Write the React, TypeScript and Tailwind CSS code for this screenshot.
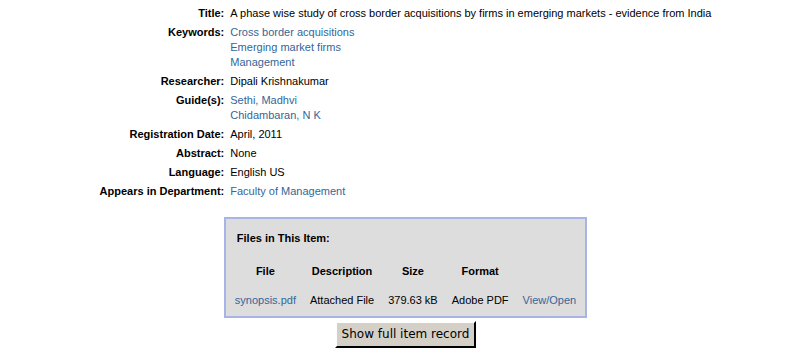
const meta: { label: string; values: string[]; link?: boolean }[] = [
  { label: "Title:", values: ["A phase wise study of cross border acquisitions by firms in emerging markets - evidence from India"] },
  { label: "Keywords:", values: ["Cross border acquisitions", "Emerging market firms", "Management"], link: true },
  { label: "Researcher:", values: ["Dipali Krishnakumar"] },
  { label: "Guide(s):", values: ["Sethi, Madhvi", "Chidambaran, N K"], link: true },
  { label: "Registration Date:", values: ["April, 2011"] },
  { label: "Abstract:", values: ["None"] },
  { label: "Language:", values: ["English US"] },
  { label: "Appears in Department:", values: ["Faculty of Management"], link: true },
];

const App = () => {
  return (
    <div className="min-h-screen bg-white text-[11px] leading-[15px] text-black font-['Liberation_Sans',Arial,sans-serif]">
      <div className="mx-auto w-fit pt-[6px] grid grid-cols-[auto_auto] gap-y-[4px]">
        {meta.map((row) => (
          <div key={row.label} className="contents">
            <div className="text-right font-bold pr-[3px]">{row.label}</div>
            <div className="pl-[3px]">
              {row.values.map((v) => (
                <div key={v} className={row.link ? "text-[#336699]" : ""}>
                  {v}
                </div>
              ))}
            </div>
          </div>
        ))}
      </div>

      <div className="mx-auto mt-[18px] w-fit border-2 border-[#a6b4e6] bg-[#dddddd] px-[9px] pt-[12px] pb-[8px]">
        <div className="font-bold mb-[18px] pl-[2px]">Files in This Item:</div>
        <div className="grid grid-cols-[auto_auto_auto_auto_auto] gap-x-[14px] gap-y-[14px] text-center">
          <div className="font-bold">File</div>
          <div className="font-bold">Description</div>
          <div className="font-bold">Size</div>
          <div className="font-bold">Format</div>
          <div></div>
          <div className="text-[#336699]">synopsis.pdf</div>
          <div>Attached File</div>
          <div>379.63 kB</div>
          <div>Adobe PDF</div>
          <div className="text-[#336699]">View/Open</div>
        </div>
      </div>

      <div className="flex justify-center mt-[3px]">
        <button className="bg-[#d4d0c8] border-2 border-t-white border-l-white border-r-black border-b-black px-[5px] h-[27px] text-[12px] font-['DejaVu_Sans',sans-serif] text-black">
          Show full item record
        </button>
      </div>
    </div>
  );
};

export default App;
